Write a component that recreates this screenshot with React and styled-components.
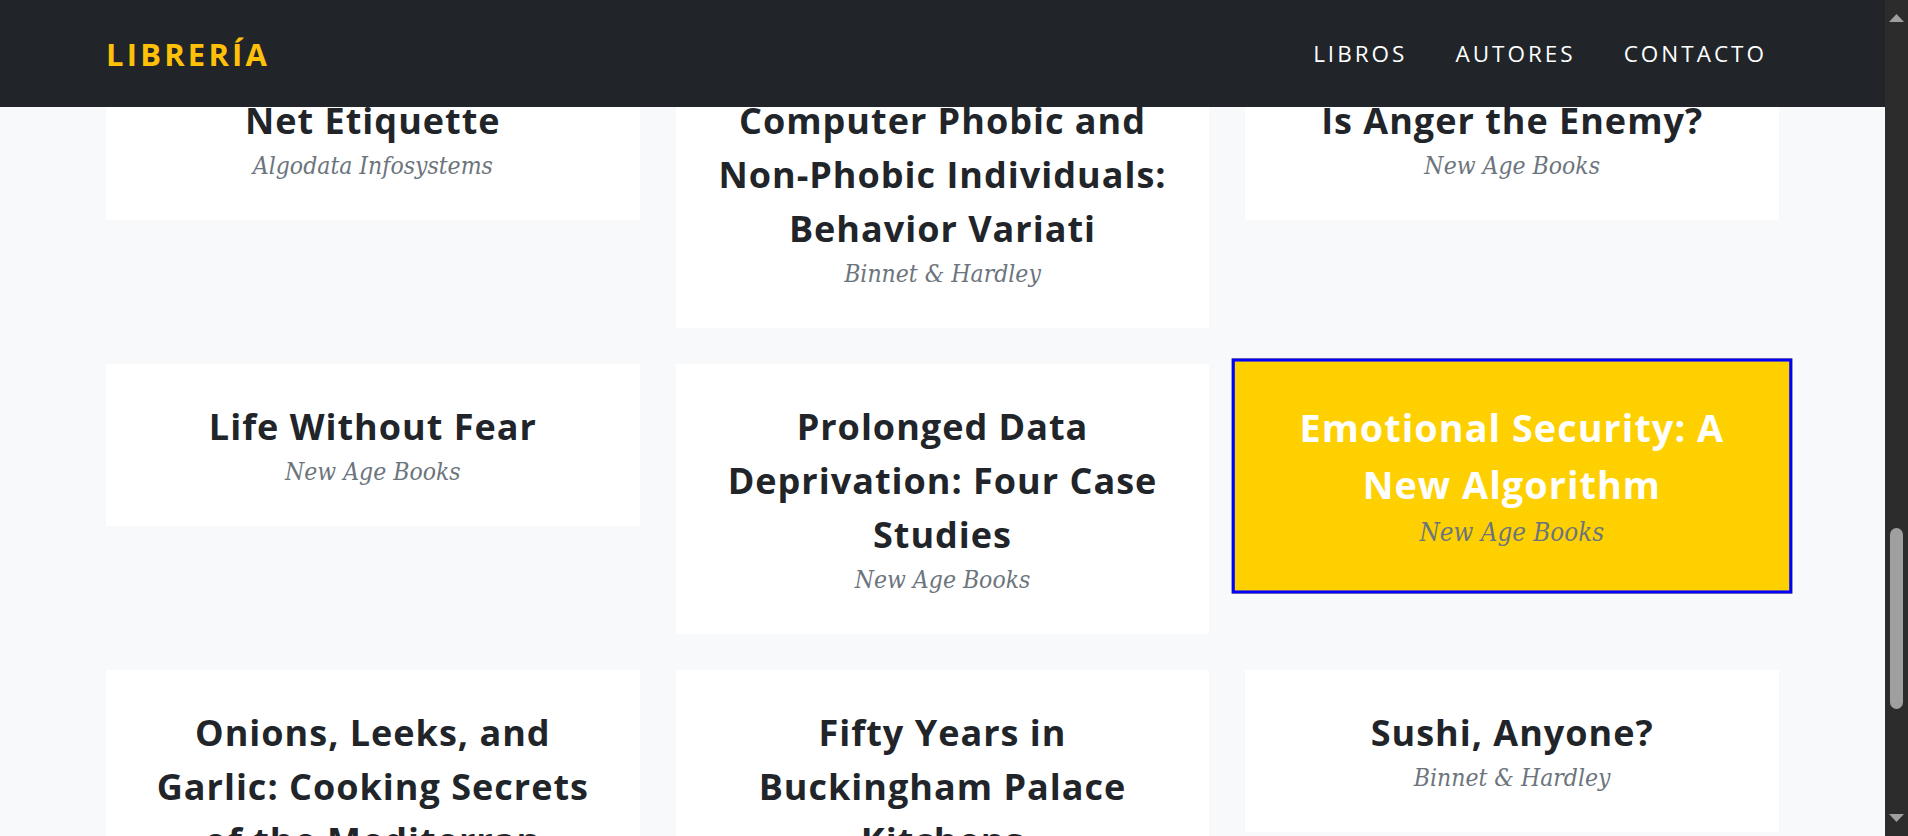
import React, { useLayoutEffect, useRef, useState } from "react";
import styled, { createGlobalStyle } from "styled-components";

const GlobalStyle = createGlobalStyle`
  html, body {
    margin: 0;
    padding: 0;
    height: 100%;
    overflow: hidden;
    background: #f8f9fa;
    font-family: "Open Sans", "Liberation Sans", sans-serif;
    color: #212529;
  }
`;

// Window frame: scrolling page + dark scroll rail on the right
const Shell = styled.div`
  display: flex;
  height: 100vh;
`;

const Scroller = styled.div`
  flex: 1;
  min-width: 0;
  overflow-y: auto;
  background: #f8f9fa;
  scrollbar-width: none;
  &::-webkit-scrollbar {
    display: none;
  }
`;

const Rail = styled.div`
  flex: none;
  width: 23px;
  display: flex;
  flex-direction: column;
  background: #2c2c2c;
`;

const RailButton = styled.div`
  height: 36px;
  display: flex;
  align-items: center;
  justify-content: center;
  color: #9f9f9f;
`;

const Track = styled.div`
  flex: 1;
  position: relative;
`;

const Thumb = styled.div`
  position: absolute;
  left: 5px;
  right: 5px;
  border-radius: 7px;
  background: #9f9f9f;
`;

// Dark top bar, stays on top while scrolling
const Navbar = styled.nav`
  position: sticky;
  top: 0;
  z-index: 20;
  height: 107px;
  background: #212529;
`;

const NavInner = styled.div`
  width: 1673px;
  height: 100%;
  margin: 0 auto;
  display: flex;
  align-items: center;
  justify-content: space-between;
`;

const Logo = styled.a`
  color: #ffc107;
  font-weight: 700;
  font-size: 31px;
  letter-spacing: 3.2px;
  text-decoration: none;
  text-transform: uppercase;
`;

const NavLinks = styled.ul`
  display: flex;
  align-items: center;
  gap: 24px;
  margin: 0;
  padding: 0;
  list-style: none;
`;

const NavLink = styled.a`
  display: block;
  padding: 0 12px;
  color: #ffffff;
  font-size: 22.5px;
  letter-spacing: 3px;
  text-transform: uppercase;
  text-decoration: none;
`;

// Intro block above the catalogue (scrolled out of view)
const Hero = styled.header`
  min-height: 1314px;
  display: flex;
  flex-direction: column;
  align-items: center;
  justify-content: center;
  gap: 12px;
`;

const HeroTitle = styled.h1`
  margin: 0;
  font-size: 60px;
  font-weight: 700;
`;

const HeroText = styled.p`
  margin: 0;
  font-family: "DejaVu Serif", "Liberation Serif", serif;
  font-style: italic;
  font-size: 24px;
  color: #6c757d;
`;

const Catalog = styled.section`
  width: 1673px;
  margin: 0 auto;
  padding: 36px 0 313px;
`;

const Grid = styled.div`
  display: grid;
  grid-template-columns: repeat(3, 1fr);
  gap: 36px;
  align-items: start;
`;

const Card = styled.article`
  box-sizing: border-box;
  padding: ${({ $active }) => ($active ? "37px 33px" : "33px")};
  background: ${({ $active }) => ($active ? "#ffd000" : "#ffffff")};
  border: 3px solid ${({ $active }) => ($active ? "#0000ff" : "transparent")};
  text-align: center;
  cursor: pointer;
  transform: ${({ $active }) => ($active ? "scale(1.05)" : "none")};
  transition: transform 0.2s, background 0.2s;
`;

const Title = styled.h2`
  margin: 0;
  font-size: 36px;
  line-height: 54px;
  font-weight: 700;
  letter-spacing: 1px;
  color: ${({ $active }) => ($active ? "#ffffff" : "#212529")};
`;

const Publisher = styled.p`
  margin: 0;
  font-family: "DejaVu Serif Condensed", "DejaVu Serif", "Liberation Serif", serif;
  font-stretch: condensed;
  font-style: italic;
  font-size: 24.5px;
  line-height: 36px;
  color: #6c757d;
`;

const ArrowIcon = ({ down }) => (
  <svg width="15" height="8" viewBox="0 0 15 8" fill="currentColor">
    <polygon points={down ? "0,0 15,0 7.5,8" : "7.5,0 15,8 0,8"} />
  </svg>
);

const books = [
  { id: "BU1032", title: "The Busy Executive's Database Guide", publisher: "Algodata Infosystems" },
  { id: "BU1111", title: "Cooking with Computers: Surreptitious Balance Sheets", publisher: "Algodata Infosystems" },
  { id: "BU2075", title: "You Can Combat Computer Stress!", publisher: "New Age Books" },
  { id: "BU7832", title: "Straight Talk About Computers", publisher: "Algodata Infosystems" },
  { id: "MC2222", title: "Silicon Valley Gastronomic Treats", publisher: "Binnet & Hardley" },
  { id: "MC3021", title: "The Gourmet Microwave", publisher: "Binnet & Hardley" },
  { id: "MC3026", title: "The Psychology of Computer Cooking", publisher: "Binnet & Hardley" },
  { id: "PC1035", title: "But Is It User Friendly?", publisher: "Algodata Infosystems" },
  { id: "PC8888", title: "Secrets of Silicon Valley", publisher: "Algodata Infosystems" },
  { id: "PC9999", title: "Net Etiquette", publisher: "Algodata Infosystems" },
  { id: "PS1372", title: "Computer Phobic and Non-Phobic Individuals: Behavior Variations", publisher: "Binnet & Hardley" },
  { id: "PS2091", title: "Is Anger the Enemy?", publisher: "New Age Books" },
  { id: "PS2106", title: "Life Without Fear", publisher: "New Age Books" },
  { id: "PS3333", title: "Prolonged Data Deprivation: Four Case Studies", publisher: "New Age Books" },
  { id: "PS7777", title: "Emotional Security: A New Algorithm", publisher: "New Age Books" },
  { id: "TC3218", title: "Onions, Leeks, and Garlic: Cooking Secrets of the Mediterranean", publisher: "Binnet & Hardley" },
  { id: "TC4203", title: "Fifty Years in Buckingham Palace Kitchens", publisher: "Binnet & Hardley" },
  { id: "TC7777", title: "Sushi, Anyone?", publisher: "Binnet & Hardley" },
];

const shortTitle = (t) => (t.length > 60 ? t.slice(0, 60) : t);

const RAIL_BUTTONS = 72;

export default function App() {
  const [activeId, setActiveId] = useState("PS7777");
  const [thumb, setThumb] = useState({ top: 0, height: 0 });
  const pageRef = useRef(null);
  const anchorRef = useRef(null);

  const syncThumb = () => {
    const page = pageRef.current;
    if (!page) return;
    const track = page.clientHeight - RAIL_BUTTONS;
    setThumb({
      top: (track * page.scrollTop) / page.scrollHeight,
      height: (track * page.clientHeight) / page.scrollHeight,
    });
  };

  // open the page already scrolled to the "Net Etiquette" row
  useLayoutEffect(() => {
    const page = pageRef.current;
    const el = anchorRef.current;
    if (!page || !el) return;
    const top =
      el.getBoundingClientRect().top - page.getBoundingClientRect().top + page.scrollTop;
    page.scrollTop = top - 58;
    syncThumb();
  }, []);

  return (
    <Shell>
      <GlobalStyle />
      <Scroller ref={pageRef} onScroll={syncThumb}>
        <Navbar>
          <NavInner>
            <Logo href="#">Librería</Logo>
            <NavLinks>
              <li><NavLink href="#libros">Libros</NavLink></li>
              <li><NavLink href="#autores">Autores</NavLink></li>
              <li><NavLink href="#contacto">Contacto</NavLink></li>
            </NavLinks>
          </NavInner>
        </Navbar>
        <Hero>
          <HeroTitle>Librería</HeroTitle>
          <HeroText>Catálogo de títulos y editoriales</HeroText>
        </Hero>
        <Catalog id="libros">
          <Grid>
            {books.map((b) => (
              <Card
                key={b.id}
                ref={b.id === "PC9999" ? anchorRef : undefined}
                $active={activeId === b.id}
                onMouseEnter={() => setActiveId(b.id)}
              >
                <Title $active={activeId === b.id}>{shortTitle(b.title)}</Title>
                <Publisher>{b.publisher}</Publisher>
              </Card>
            ))}
          </Grid>
        </Catalog>
      </Scroller>
      <Rail>
        <RailButton><ArrowIcon /></RailButton>
        <Track>
          <Thumb style={{ top: thumb.top, height: thumb.height }} />
        </Track>
        <RailButton><ArrowIcon down /></RailButton>
      </Rail>
    </Shell>
  );
}
